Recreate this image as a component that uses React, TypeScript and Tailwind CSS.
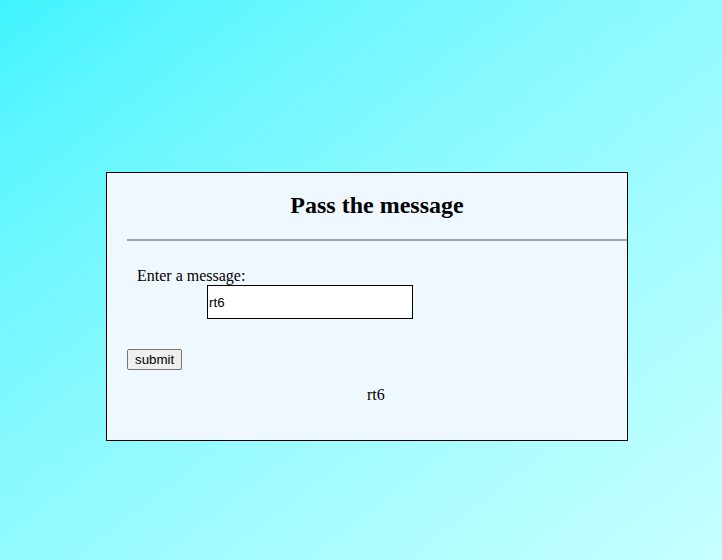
import React, { useState } from 'react';

const App: React.FC = () => {
  const [msg, setMsg] = useState('rt6');
  const [shown, setShown] = useState('rt6');

  return (
    <div className="min-h-[560px] w-full bg-gradient-to-br from-[#3ef4ff] to-[#c6ffff] pt-[172px] pl-[106px] font-['Liberation_Serif',serif] text-black">
      <div className="w-[522px] h-[269px] border border-black bg-[#f0f8ff] pl-5">
        <h2 className="pt-[18px] text-center text-[24px] font-bold leading-[28px]">Pass the message</h2>
        <hr className="mt-[20px] border-0 border-t-2 border-t-[#a0a0a0]" />
        <div className="mt-[26px] pl-[10px] text-[16px] leading-[18px]">Enter a message:</div>
        <div className="pl-[80px]">
          <input
            value={msg}
            onChange={(e) => setMsg(e.target.value)}
            className="h-[34px] w-[206px] border border-black bg-white px-[1px] font-['Liberation_Sans',sans-serif] text-[13.33px] outline-none"
          />
        </div>
        <button
          onClick={() => setShown(msg)}
          className="mt-[30px] h-[21px] rounded-[2px] border border-[#767676] bg-[#efefef] px-[7px] font-['Liberation_Sans',sans-serif] text-[13.33px] leading-[15px]"
        >
          submit
        </button>
        <p className="mt-[15px] pl-[240px] text-[16px] leading-[18px]">{shown}</p>
      </div>
    </div>
  );
};

export default App;
